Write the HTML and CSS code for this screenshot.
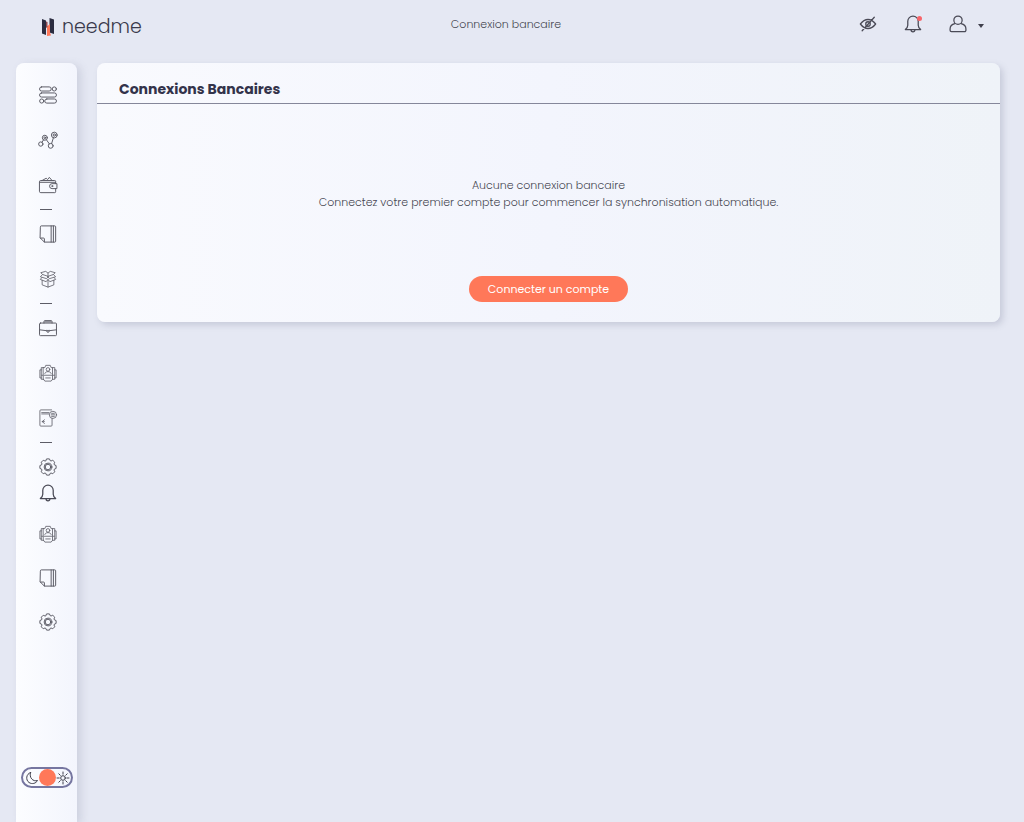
FILE: index.html
```html
<!DOCTYPE html>
<html lang="fr">
<head>
<meta charset="utf-8">
<meta name="viewport" content="width=device-width, initial-scale=1">
<title>Connexion bancaire</title>
<link rel="stylesheet" href="styles.css">
</head>
<body>
<svg class="sprite" aria-hidden="true">
  <symbol id="i-bell" viewBox="0 0 20 20"><path d="M4.200 7a5.800 5.800 0 0 1 11.600 0v4.300c0 2 .8 3.200 2.700 4.900h-17c1.900-1.700 2.700-2.900 2.700-4.900zM7.800 16.500a2.200 2.200 0 0 0 4.400 0"/></symbol>
  <symbol id="i-doc" viewBox="0 0 20 20"><path d="M1.500 2a1 1 0 0 1 1-1h15a1 1 0 0 1 1 1v16a1 1 0 0 1-1 1H6l-4.500-4.500zM1.500 14.500h3.500a1 1 0 0 1 1 1V19M13.500 1v18M16 1v18"/></symbol>
  <symbol id="i-gear" viewBox="0 0 20 20"><circle cx="10" cy="10" r="4.300"/><circle cx="10" cy="10" r="3.100"/><path d="M7.600 2.900 8.400 1h3.200l.8 1.900 1 .4 1.900-.8 2.200 2.200-.8 1.900.4 1 1.900.8v3.200l-1.900.8-.4 1 .8 1.900-2.200 2.200-1.900-.8-1 .4-.8 1.900H8.400l-.8-1.900-1-.4-1.900.8-2.200-2.200.8-1.900-.4-1L1 11.600V8.400l1.900-.8.4-1-.8-1.900 2.200-2.200 1.900.8z"/></symbol>
  <symbol id="i-pack" viewBox="0 0 20 20"><path d="M5 4h1.500L7.500 1.500h5l1 2.500H15v13L13.500 19h-7L5 17zM5 4H2.500v13H5M15 4h2.500v13H15M2.500 6.500H1v9h1.500M17.500 6.500H19v9h-1.500M6 12.500h8M7.500 15.500h5M6.500 10.500c.4-1.300 1.500-2 3.500-2s3.100.7 3.500 2M3 12.500h1.500M15.500 12.500H17"/><circle cx="10" cy="6" r="2"/></symbol>
</svg>

<header class="topbar">
  <a class="logo" href="#" aria-label="needme">
    <svg class="logo-mark" viewBox="0 0 14 20" aria-hidden="true"><path fill="#2b2c40" d="m1 2 4 1.500V18l-4-1.500zM8.500 1l4.500 1.500V17l-4.500-1.500z"/><path fill="#ff7859" d="M6 9.500 9 7v8.500l1 3-4 .5z"/><path fill="#8e4a50" d="M5 4.500 6.500 5v5L5 11z"/></svg>
    <span>needme</span>
  </a>
  <h1 class="page-title">Connexion bancaire</h1>
  <div class="actions">
    <button class="icon-btn" type="button" aria-label="Masquer les montants">
      <svg class="icon strong" viewBox="0 0 20 20" aria-hidden="true"><path d="M1.500 10C4 6.700 6.800 5 10 5s6 1.700 8.500 5c-2.500 3.300-5.300 5-8.500 5s-6-1.700-8.500-5zM3.500 17.500 17 2.500"/><circle cx="10" cy="10" r="2.500"/></svg>
    </button>
    <button class="icon-btn notify" type="button" aria-label="Notifications">
      <svg class="icon strong" aria-hidden="true"><use href="#i-bell"/></svg>
    </button>
    <button class="icon-btn account" type="button" aria-label="Compte">
      <svg class="icon strong" viewBox="0 0 20 20" aria-hidden="true"><circle cx="10" cy="5.800" r="4.600"/><path d="M6.500 9.700C3.200 10.500 1.200 12.500 1.200 15.500v1.500a1.500 1.500 0 0 0 1.500 1.500h14.600a1.500 1.500 0 0 0 1.500-1.500v-1.500c0-3-2-5-5.300-5.800"/></svg>
      <span class="caret"></span>
    </button>
  </div>
</header>

<div class="layout">
  <nav class="sidebar" aria-label="Navigation principale">
    <div class="group">
      <a href="#" aria-label="Tableau de bord"><svg class="icon" viewBox="0 0 20 20"><rect x=".6" y="1" width="13" height="4.600" rx="2.300"/><circle cx="17" cy="3.300" r="2.300"/><rect x=".6" y="7.700" width="18.800" height="4.600" rx="2.300"/><circle cx="3" cy="16.700" r="2.300"/><rect x="6.400" y="14.400" width="13" height="4.600" rx="2.300"/></svg></a>
      <a href="#" aria-label="Statistiques"><svg class="icon" viewBox="0 0 20 20"><circle cx="2" cy="14.500" r="2.400"/><circle cx="6.500" cy="7.500" r="2.800"/><circle cx="6.500" cy="7.500" r="1"/><circle cx="13" cy="16.500" r="2.700"/><circle cx="17" cy="4.500" r="3.200"/><circle cx="17" cy="4.500" r="1.300"/><path d="m3.300 12.500 1.700-2.600M8.200 9.700l3.300 4.600M14 14l2-6.400"/></svg></a>
      <a href="#" aria-label="Portefeuille"><svg class="icon" viewBox="0 0 20 20"><path d="M18.500 8.500V6a1 1 0 0 0-1-1H2a1.500 1.500 0 0 0-1.500 1.500V17A1.500 1.500 0 0 0 2 18.500h15.500a1 1 0 0 0 1-1V14M3.500 5 8 2.500 9.500 4l2-2.500 3 3.500M19.500 8.500h-5a2.700 2.700 0 0 0 0 5.500h5zM1 7h17.500"/><circle cx="14.700" cy="11.200" r=".6"/></svg></a>
    </div>
    <hr class="divider">
    <div class="group">
      <a href="#" aria-label="Documents"><svg class="icon"><use href="#i-doc"/></svg></a>
      <a href="#" aria-label="Produits"><svg class="icon thin" viewBox="0 0 20 20"><path d="M10 7 4 5 1.500 7.500 8 9.500zM10 7l6-2 2.500 2.500L12 9.500zM4 5 2 3l5.500-1.500L10 3.500l2.500-2L18 3l-2 2M10 3.500V7M3 8.500l-1.500 2L8 13l2-2.500 2 2.500 6.500-2.500-1.500-2M3.500 11.500v5L10 19l6.500-2.500v-5M10 10.500V19"/></svg></a>
    </div>
    <hr class="divider">
    <div class="group">
      <a href="#" aria-label="Activité"><svg class="icon" viewBox="0 0 20 20"><rect x=".6" y="4.500" width="18.800" height="14" rx="1"/><path d="M5.500 4.500V2.800a1 1 0 0 1 1-1h7a1 1 0 0 1 1 1v1.700M6.500 3.200h7M.6 12l7.900 1h3l7.900-1M8.700 12.500v1a1.300 1.300 0 0 0 2.600 0v-1"/></svg></a>
      <a href="#" aria-label="Équipe"><svg class="icon thin"><use href="#i-pack"/></svg></a>
      <a href="#" aria-label="Factures"><svg class="icon thin" viewBox="0 0 20 20"><path d="M14 1H2a1 1 0 0 0-1 1v16a1 1 0 0 0 1 1h11.500a1 1 0 0 0 1-1v-7.500M3 4h8M3 5.500h8M6 12l-2.500 2L6 16M3.500 14H6"/><circle cx="15.500" cy="6.500" r="4"/><path d="M13.500 6.500h4M14 4.800h3M14 8.200h3"/></svg></a>
    </div>
    <hr class="divider">
    <div class="group tight">
      <a href="#" aria-label="Paramètres"><svg class="icon"><use href="#i-gear"/></svg></a>
      <a href="#" aria-label="Notifications"><svg class="icon strong"><use href="#i-bell"/></svg></a>
    </div>
    <div class="group extra">
      <a href="#" aria-label="Partenaires"><svg class="icon thin"><use href="#i-pack"/></svg></a>
      <a href="#" aria-label="Archives"><svg class="icon"><use href="#i-doc"/></svg></a>
      <a href="#" aria-label="Configuration"><svg class="icon"><use href="#i-gear"/></svg></a>
    </div>
    <label class="theme">
      <input type="checkbox" aria-label="Thème clair ou sombre">
      <svg viewBox="0 0 14 14" aria-hidden="true"><path d="M5.500 1.500C1 3 .500 9 4 11.500c3 2 7 1 8.500-2C8 11 3.800 6.500 5.500 1.500z"/></svg>
      <span class="knob"></span>
      <svg viewBox="0 0 14 14" aria-hidden="true"><circle cx="7" cy="7" r="2.300"/><path d="M7 1v2.200M7 10.800V13M1 7h2.200M10.800 7H13M2.800 2.800l1.500 1.500M9.700 9.700l1.500 1.500M2.800 11.200l1.500-1.500M9.700 4.300l1.500-1.500"/></svg>
    </label>
  </nav>

  <main class="content">
    <section class="card">
      <h2 class="card-title">Connexions Bancaires</h2>
      <div class="empty">
        <p>Aucune connexion bancaire<br>Connectez votre premier compte pour commencer la synchronisation automatique.</p>
        <button class="primary" type="button">Connecter un compte</button>
      </div>
    </section>
  </main>
</div>
</body>
</html>
```

FILE: styles.css
```css
* { box-sizing: border-box; }

body {
  margin: 0;
  min-height: 100vh;
  display: flex;
  flex-direction: column;
  background: #e5e8f3;
  color: #484852;
  font: 300 11px/17px Poppins, Inter, sans-serif;
}

button {
  font: inherit;
  border: 0;
  padding: 0;
  background: none;
  color: inherit;
  cursor: pointer;
}

.sprite { display: none; }

.icon {
  display: block;
  width: 18px;
  height: 18px;
  overflow: visible;
  fill: none;
  stroke: #5c5c66;
  stroke-width: 1.1;
  stroke-linejoin: round;
  stroke-linecap: round;
}
.icon.thin { stroke-width: 0.9; }
.icon.strong { stroke: #4a4a56; stroke-width: 1.4; }

.topbar {
  display: grid;
  grid-template-columns: 1fr auto 1fr;
  align-items: center;
  height: 63px;
  padding: 0 40px 15px 28px;
}

.logo {
  display: flex;
  align-items: center;
  gap: 7px;
  margin: 5px 0 0 13px;
  color: #3a3a4c;
  text-decoration: none;
  font-size: 19px;
  line-height: 26px;
}
.logo-mark { width: 14px; height: 20px; }

.page-title { margin: 0; font: inherit; }

.actions {
  display: flex;
  justify-content: flex-end;
  gap: 27px;
}
.icon-btn { display: flex; align-items: center; }
.notify { position: relative; }
.notify::after {
  content: "";
  position: absolute;
  top: 1px;
  right: 0;
  width: 5px;
  height: 5px;
  border-radius: 50%;
  background: #f8656a;
}
.account { gap: 11px; }
.caret {
  margin-top: 3px;
  border: 3px solid transparent;
  border-top: 4px solid #3f3f4c;
  border-bottom: 0;
}

.layout {
  flex: 1;
  display: flex;
  gap: 20px;
  padding: 0 24px 0 16px;
}

.sidebar {
  display: flex;
  flex-direction: column;
  align-items: center;
  width: 61px;
  padding: 22px 0 34px 3px;
  border-radius: 8px 8px 0 0;
  background: linear-gradient(90deg, #fcfdff, #f3f5fd);
  box-shadow: 4px 2px 8px rgba(110, 115, 145, 0.2);
}
.group { display: grid; gap: 25px; }
.group a { display: grid; place-items: center; height: 20px; }
.group.tight { gap: 6px; }
.group.extra { gap: 24px; margin-top: 21px; }
.divider {
  width: 12px;
  height: 1px;
  margin: 14px 4px 14px 0;
  border: 0;
  background: #5c5c66;
}

.theme {
  display: flex;
  align-items: center;
  justify-content: space-between;
  width: 52px;
  height: 21px;
  margin: auto 3px 0 0;
  padding: 0 1px 0 2px;
  border: 2px solid #7676a0;
  border-radius: 11px;
  cursor: pointer;
}
.theme input {
  position: absolute;
  opacity: 0;
}
.theme svg {
  width: 14px;
  height: 14px;
  fill: none;
  stroke: #3f3f4c;
  stroke-linecap: round;
}
.knob {
  width: 17px;
  height: 17px;
  border-radius: 50%;
  background: #ff7859;
}

.content { flex: 1; min-width: 0; }

.card {
  border-radius: 8px;
  background: linear-gradient(90deg, #f9fafe, #f3f5fd 50%, #eff3f8);
  box-shadow: 3px 3px 6px rgba(110, 115, 145, 0.25);
}
.card-title {
  margin: 0;
  padding: 16px 22px 4px;
  border-bottom: 1px solid #85879a;
  color: #33334a;
  font-size: 14px;
  font-weight: 700;
  line-height: 20px;
}

.empty {
  display: flex;
  flex-direction: column;
  align-items: center;
  gap: 65px;
  padding: 73px 20px 20px;
  text-align: center;
}
.empty p { margin: 0; }

.primary {
  padding: 5px 19px 4px;
  border-radius: 13px;
  background: #ff7859;
  color: #fff;
  font-weight: 400;
}
```
